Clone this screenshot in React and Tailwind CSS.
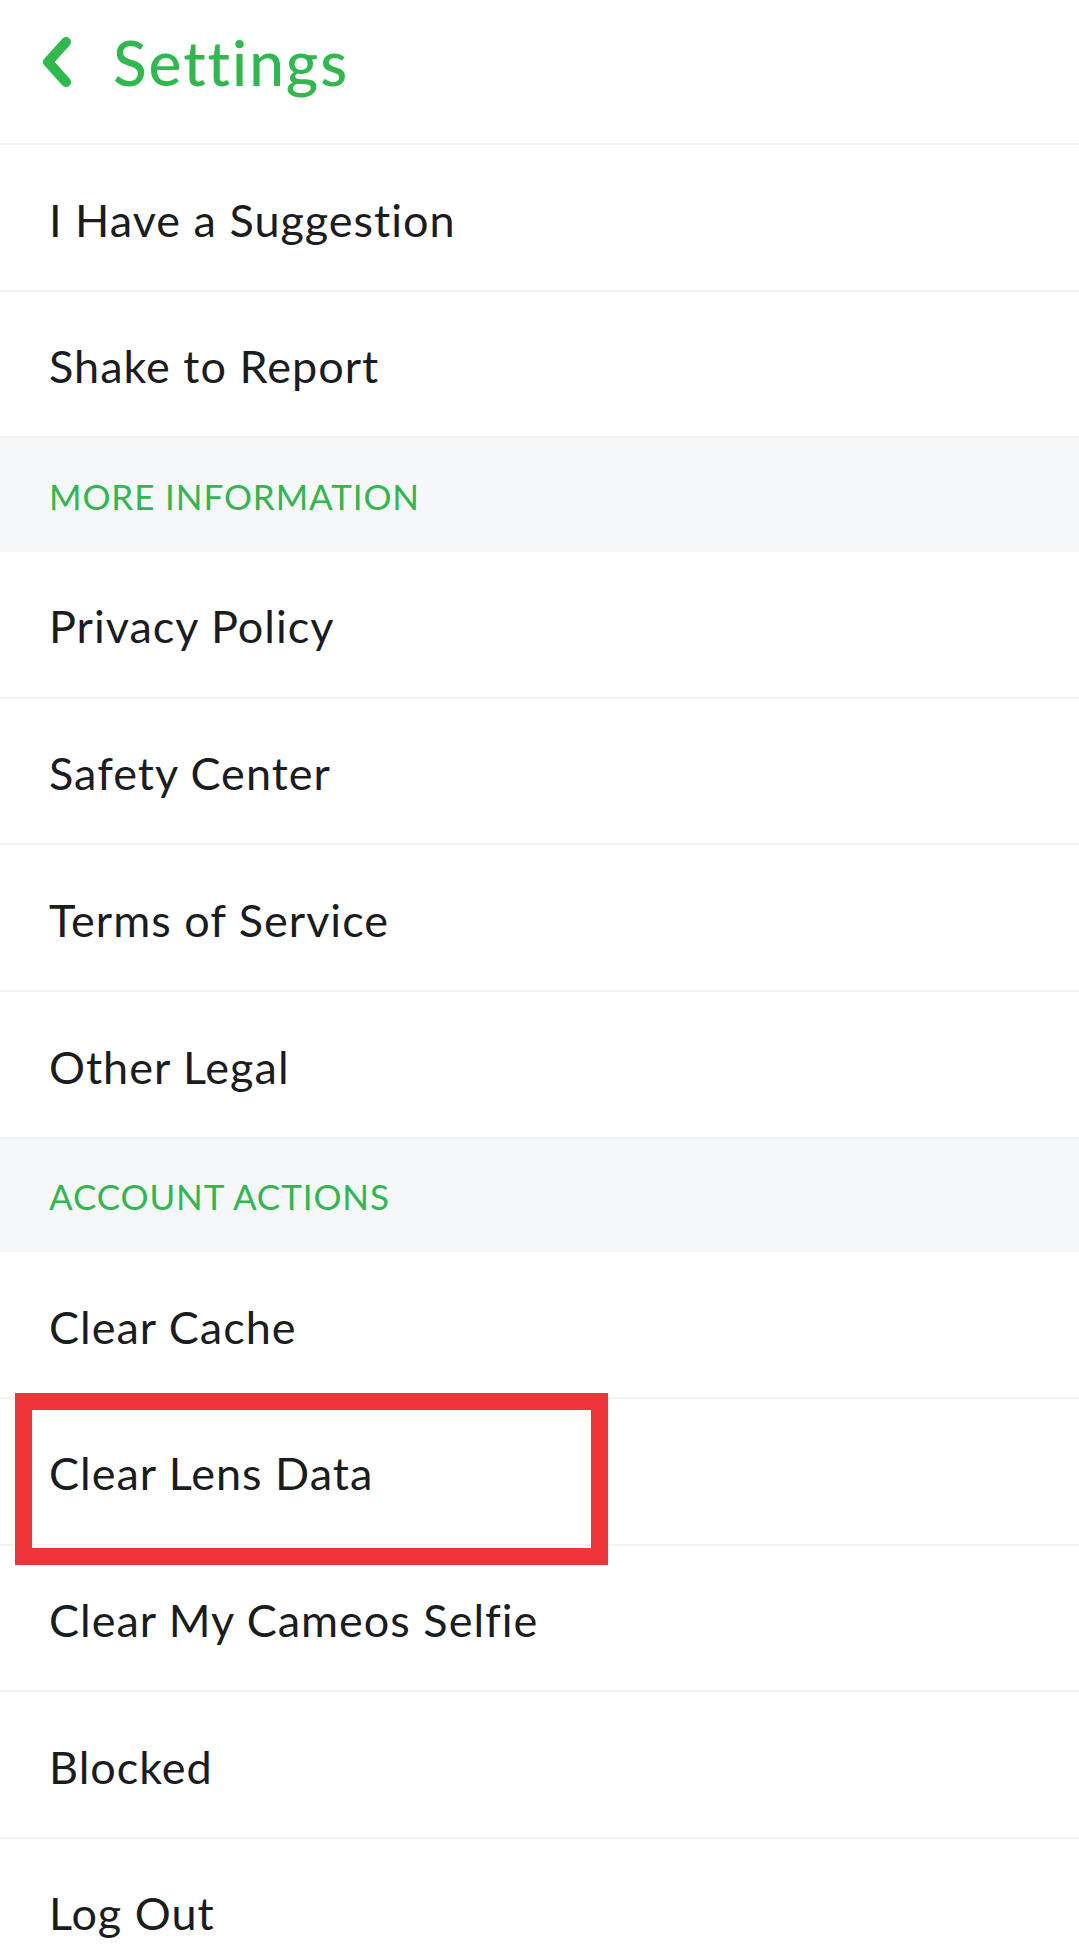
const font = { fontFamily: 'Lato, "Noto Sans", sans-serif' };

function Row({ label, boxed }) {
  return (
    <div className="relative flex h-[146.7px] shrink-0 items-center border-b-2 border-[#f1f2f4] pl-[49px] pt-[6px]">
      <span className="text-[45px] tracking-[1px] text-[#1b1c1e]">{label}</span>
      {boxed && (
        <div className="absolute left-[15px] top-[-6px] h-[172px] w-[593px] border-[17px] border-[#ed3439]" />
      )}
    </div>
  );
}

function Section({ label }) {
  return (
    <div className="flex h-[113.5px] shrink-0 items-center bg-[#f6f7f9] pl-[49px] pt-[2px]">
      <span className="text-[35px] tracking-[0.9px] text-[#2fb84d]">{label}</span>
    </div>
  );
}

export default function App() {
  return (
    <div className="flex h-[1946px] w-[1079px] flex-col overflow-hidden bg-white" style={font}>
      {/* Header */}
      <div className="flex h-[145px] shrink-0 items-start border-b-2 border-[#f1f2f4] pt-[22px]">
        <svg className="ml-[38px] mt-[14px] h-[52px] w-[36px]" viewBox="0 0 36 52" fill="none">
          <path d="M28 6 L10 26 L28 46" stroke="#2fb84d" strokeWidth="10" strokeLinecap="round" strokeLinejoin="round" />
        </svg>
        <span className="ml-[39px] text-[62px] font-medium leading-[80px] tracking-[2px] text-[#2fb84d]">Settings</span>
      </div>

      <Row label="I Have a Suggestion" />
      <Row label="Shake to Report" />
      <Section label="MORE INFORMATION" />
      <Row label="Privacy Policy" />
      <Row label="Safety Center" />
      <Row label="Terms of Service" />
      <Row label="Other Legal" />
      <Section label="ACCOUNT ACTIONS" />
      <Row label="Clear Cache" />
      <Row label="Clear Lens Data" boxed />
      <Row label="Clear My Cameos Selfie" />
      <Row label="Blocked" />
      <Row label="Log Out" />
    </div>
  );
}
